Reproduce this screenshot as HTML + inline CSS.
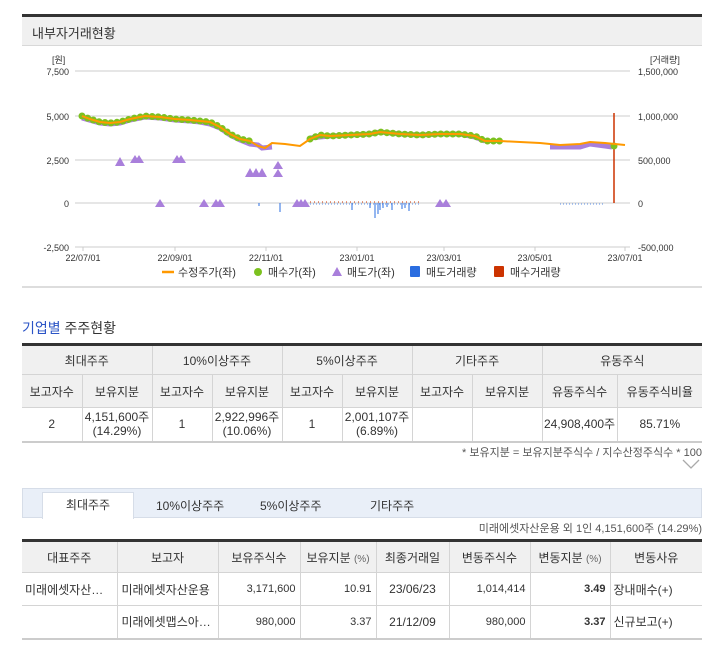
<!DOCTYPE html>
<html><head><meta charset="utf-8"><style>
*{margin:0;padding:0;box-sizing:border-box}
body{width:716px;height:647px;background:#fff;font-family:"Liberation Sans","Noto Sans CJK KR",sans-serif;color:#333;position:relative;overflow:hidden;font-size:12px}
.abs{position:absolute}
table{border-collapse:collapse;position:absolute;table-layout:fixed}
td,th{font-weight:normal;text-align:center;border:1px solid #d4d4d4;font-size:12px;color:#333}
th{background:#f0f0f0}
</style></head><body>
<div class="abs" style="left:22px;top:14px;width:680px;height:3px;background:#333"></div>
<div class="abs" style="left:22px;top:17px;width:680px;height:29px;background:#f0f0f0;border-bottom:1px solid #d8d8d8;font-size:13px;padding:6px 0 0 10px;color:#333">내부자거래현황</div>
<svg class="abs" style="left:0;top:0" width="716" height="300" font-family="Liberation Sans, sans-serif" font-size="9" fill="#333">
<g stroke="#ddd" stroke-width="1.5">
<line x1="75" y1="71" x2="630" y2="71"/><line x1="75" y1="116" x2="630" y2="116"/><line x1="75" y1="160" x2="630" y2="160"/><line x1="75" y1="203" x2="630" y2="203"/><line x1="75" y1="247" x2="630" y2="247"/></g>
<g stroke="#ccc"><line x1="83" y1="247" x2="83" y2="251"/><line x1="175" y1="247" x2="175" y2="251"/><line x1="266" y1="247" x2="266" y2="251"/><line x1="357" y1="247" x2="357" y2="251"/><line x1="444" y1="247" x2="444" y2="251"/><line x1="535" y1="247" x2="535" y2="251"/><line x1="625" y1="247" x2="625" y2="251"/></g>
<g text-anchor="end"><text x="69" y="75">7,500</text><text x="69" y="120">5,000</text><text x="69" y="164">2,500</text><text x="69" y="207">0</text><text x="69" y="251">-2,500</text></g>
<text x="52" y="63">[원]</text><text x="650" y="63">[거래량]</text>
<g><text x="638" y="75">1,500,000</text><text x="638" y="120">1,000,000</text><text x="638" y="164">500,000</text><text x="638" y="207">0</text><text x="638" y="251">-500,000</text></g>
<g text-anchor="middle"><text x="83" y="261">22/07/01</text><text x="175" y="261">22/09/01</text><text x="266" y="261">22/11/01</text><text x="357" y="261">23/01/01</text><text x="444" y="261">23/03/01</text><text x="535" y="261">23/05/01</text><text x="625" y="261">23/07/01</text></g>
<g stroke="#2a6de0" stroke-width="1"><line x1="280" y1="203" x2="280" y2="212"/><line x1="259" y1="203" x2="259" y2="206"/><line x1="352" y1="203" x2="352" y2="210"/><line x1="375" y1="203" x2="375" y2="218"/><line x1="378" y1="203" x2="378" y2="214"/><line x1="380" y1="203" x2="380" y2="210"/><line x1="383" y1="203" x2="383" y2="208"/><line x1="392" y1="203" x2="392" y2="210"/><line x1="402" y1="203" x2="402" y2="209"/><line x1="405" y1="203" x2="405" y2="208"/><line x1="409" y1="203" x2="409" y2="211"/><line x1="370" y1="203" x2="370" y2="208"/><line x1="387" y1="203" x2="387" y2="207"/></g>
<g stroke="#2a6de0" stroke-width="0.8" stroke-dasharray="1 2"><line x1="310" y1="204" x2="420" y2="204"/><line x1="560" y1="204" x2="605" y2="204"/></g>
<g stroke="#cc3300" stroke-dasharray="1 3"><line x1="310" y1="202" x2="420" y2="202"/></g>
<line x1="614" y1="203" x2="614" y2="113" stroke="#cc3300" stroke-width="1.5"/>
<polyline fill="none" stroke="#a97fdb" stroke-width="5" points="82,118 100,123 110,124 120,123 130,120 145,117 160,118 175,120 190,121 200,122 210,124 220,128 230,135 240,140 250,144 258,145 262,148 272,147" />
<polyline fill="none" stroke="#a97fdb" stroke-width="5" points="310,138 330,136 350,135 370,134 380,132 400,134 420,135 440,134 460,134 475,137 485,141" />
<polyline fill="none" stroke="#a97fdb" stroke-width="5" points="550,147 580,147 590,144 605,146 612,147"/>
<polyline fill="none" stroke="#7cc11f" stroke-width="7" stroke-linecap="round" stroke-dasharray="0 6" points="82,116 90,119 100,122 110,123 120,122 130,119 145,116 160,117 175,119 190,120 200,121 210,122 220,127 230,134 240,139 250,141" />
<polyline fill="none" stroke="#7cc11f" stroke-width="7" stroke-linecap="round" stroke-dasharray="0 6" points="310,139 320,135 330,136 350,135 370,134 380,132 400,134 420,135 440,134 460,134 475,136 485,141 490,141 500,141 505,141"/>
<circle cx="614" cy="146" r="3.5" fill="#7cc11f"/>
<polyline fill="none" stroke="#ff9900" stroke-width="2" points="82,116 90,119 100,122 110,123 120,122 130,119 145,116 160,117 175,119 190,120 200,121 210,122 220,127 230,134 240,139 250,141 258,146 265,148 272,143 285,144 300,146 310,139 320,135 330,136 350,135 370,134 380,132 400,134 420,135 440,134 460,134 475,136 485,141 500,141 520,142 540,143 560,145 580,144 590,142 605,143 625,145"/>
<g fill="#a97fdb">
<polygon points="115,166 120,157 125,166"/><polygon points="130,163 135,155 140,163"/><polygon points="134,163 139,155 144,163"/><polygon points="172,163 177,155 182,163"/><polygon points="176,163 181,155 186,163"/>
<polygon points="245,177 250,168 255,177"/><polygon points="251,177 256,168 261,177"/><polygon points="257,177 262,168 267,177"/><polygon points="273,169 278,161 283,169"/><polygon points="273,177 278,169 283,177"/>
<polygon points="155,207 160,199 165,207"/><polygon points="199,207 204,199 209,207"/><polygon points="211,207 216,199 221,207"/><polygon points="215,207 220,199 225,207"/><polygon points="292,207 297,199 302,207"/><polygon points="296,207 301,199 306,207"/><polygon points="300,207 305,199 310,207"/><polygon points="435,207 440,199 445,207"/><polygon points="441,207 446,199 451,207"/></g>
<g font-size="11">
<line x1="162" y1="272" x2="174" y2="272" stroke="#ff9900" stroke-width="2.5"/><text x="178" y="276">수정주가(좌)</text>
<circle cx="258" cy="272" r="4" fill="#7cc11f"/><text x="268" y="276">매수가(좌)</text>
<polygon points="332,276 337,267 342,276" fill="#a97fdb"/><text x="347" y="276">매도가(좌)</text>
<rect x="410" y="266" width="10" height="11" rx="1" fill="#2a6de0"/><text x="426" y="276">매도거래량</text>
<rect x="494" y="266" width="10" height="11" rx="1" fill="#cc3300"/><text x="510" y="276">매수거래량</text></g>
<rect x="22" y="286" width="680" height="2" fill="#ddd"/>
</svg>

<div class="abs" style="left:22px;top:318px;font-size:14px"><span style="color:#2b54c6">기업별</span> 주주현황</div>
<table style="left:22px;top:343px;width:680px;border-top:3px solid #333;border-bottom:2px solid #ccc">
<colgroup><col style="width:60px"><col style="width:70px"><col style="width:60px"><col style="width:70px"><col style="width:60px"><col style="width:70px"><col style="width:60px"><col style="width:70px"><col style="width:75px"><col style="width:85px"></colgroup>
<tr style="height:30px"><th colspan="2" style="border-left:none">최대주주</th><th colspan="2">10%이상주주</th><th colspan="2">5%이상주주</th><th colspan="2">기타주주</th><th colspan="2" style="border-right:none">유동주식</th></tr>
<tr style="height:33px"><th style="border-left:none">보고자수</th><th>보유지분</th><th>보고자수</th><th>보유지분</th><th>보고자수</th><th>보유지분</th><th>보고자수</th><th>보유지분</th><th>유동주식수</th><th style="border-right:none">유동주식비율</th></tr>
<tr style="height:34px;line-height:14px"><td style="border-left:none">2</td><td>4,151,600주<br>(14.29%)</td><td>1</td><td>2,922,996주<br>(10.06%)</td><td>1</td><td>2,001,107주<br>(6.89%)</td><td></td><td></td><td>24,908,400주</td><td style="border-right:none">85.71%</td></tr>
</table>
<div class="abs" style="right:14px;top:444px;font-size:11px;color:#555">* 보유지분 = 보유지분주식수 / 지수산정주식수 * 100</div>
<svg class="abs" style="left:682px;top:459px" width="18" height="11"><polyline points="1,1 9,9 17,1" fill="none" stroke="#aaa" stroke-width="1.3"/></svg>

<div class="abs" style="left:22px;top:488px;width:680px;height:30px;background:#e9eff8;border:1px solid #d6dde8"></div>
<div class="abs" style="left:42px;top:492px;width:92px;height:27px;background:#fff;border:1px solid #d6dde8;border-bottom:none;text-align:center;line-height:24px">최대주주</div>
<div class="abs" style="left:156px;top:497px">10%이상주주</div>
<div class="abs" style="left:260px;top:497px">5%이상주주</div>
<div class="abs" style="left:370px;top:497px">기타주주</div>
<div class="abs" style="right:14px;top:520px;font-size:11px;color:#555">미래에셋자산운용 외 1인 4,151,600주 (14.29%)</div>
<table style="left:22px;top:539px;width:680px;border-top:3px solid #333;border-bottom:2px solid #ccc">
<colgroup><col style="width:95px"><col style="width:101px"><col style="width:82px"><col style="width:76px"><col style="width:73px"><col style="width:81px"><col style="width:80px"><col style="width:92px"></colgroup>
<tr style="height:32px"><th style="border-left:none">대표주주</th><th>보고자</th><th>보유주식수</th><th>보유지분 <span style="font-size:10px;color:#666">(%)</span></th><th>최종거래일</th><th>변동주식수</th><th>변동지분 <span style="font-size:10px;color:#666">(%)</span></th><th style="border-right:none">변동사유</th></tr>
<tr style="height:33px"><td style="border-left:none;text-align:left;padding-left:3px">미래에셋자산…</td><td style="text-align:left;padding-left:4px">미래에셋자산운용</td><td style="text-align:right;padding-right:4px;font-size:11px">3,171,600</td><td style="text-align:right;padding-right:4px;font-size:11px">10.91</td><td>23/06/23</td><td style="text-align:right;padding-right:4px;font-size:11px">1,014,414</td><td style="text-align:right;padding-right:4px;font-size:11px;font-weight:bold">3.49</td><td style="border-right:none;text-align:left;padding-left:3px">장내매수(+)</td></tr>
<tr style="height:33px"><td style="border-left:none"></td><td style="text-align:left;padding-left:4px">미래에셋맵스아…</td><td style="text-align:right;padding-right:4px;font-size:11px">980,000</td><td style="text-align:right;padding-right:4px;font-size:11px">3.37</td><td>21/12/09</td><td style="text-align:right;padding-right:4px;font-size:11px">980,000</td><td style="text-align:right;padding-right:4px;font-size:11px;font-weight:bold">3.37</td><td style="border-right:none;text-align:left;padding-left:3px">신규보고(+)</td></tr>
</table>
</body></html>
